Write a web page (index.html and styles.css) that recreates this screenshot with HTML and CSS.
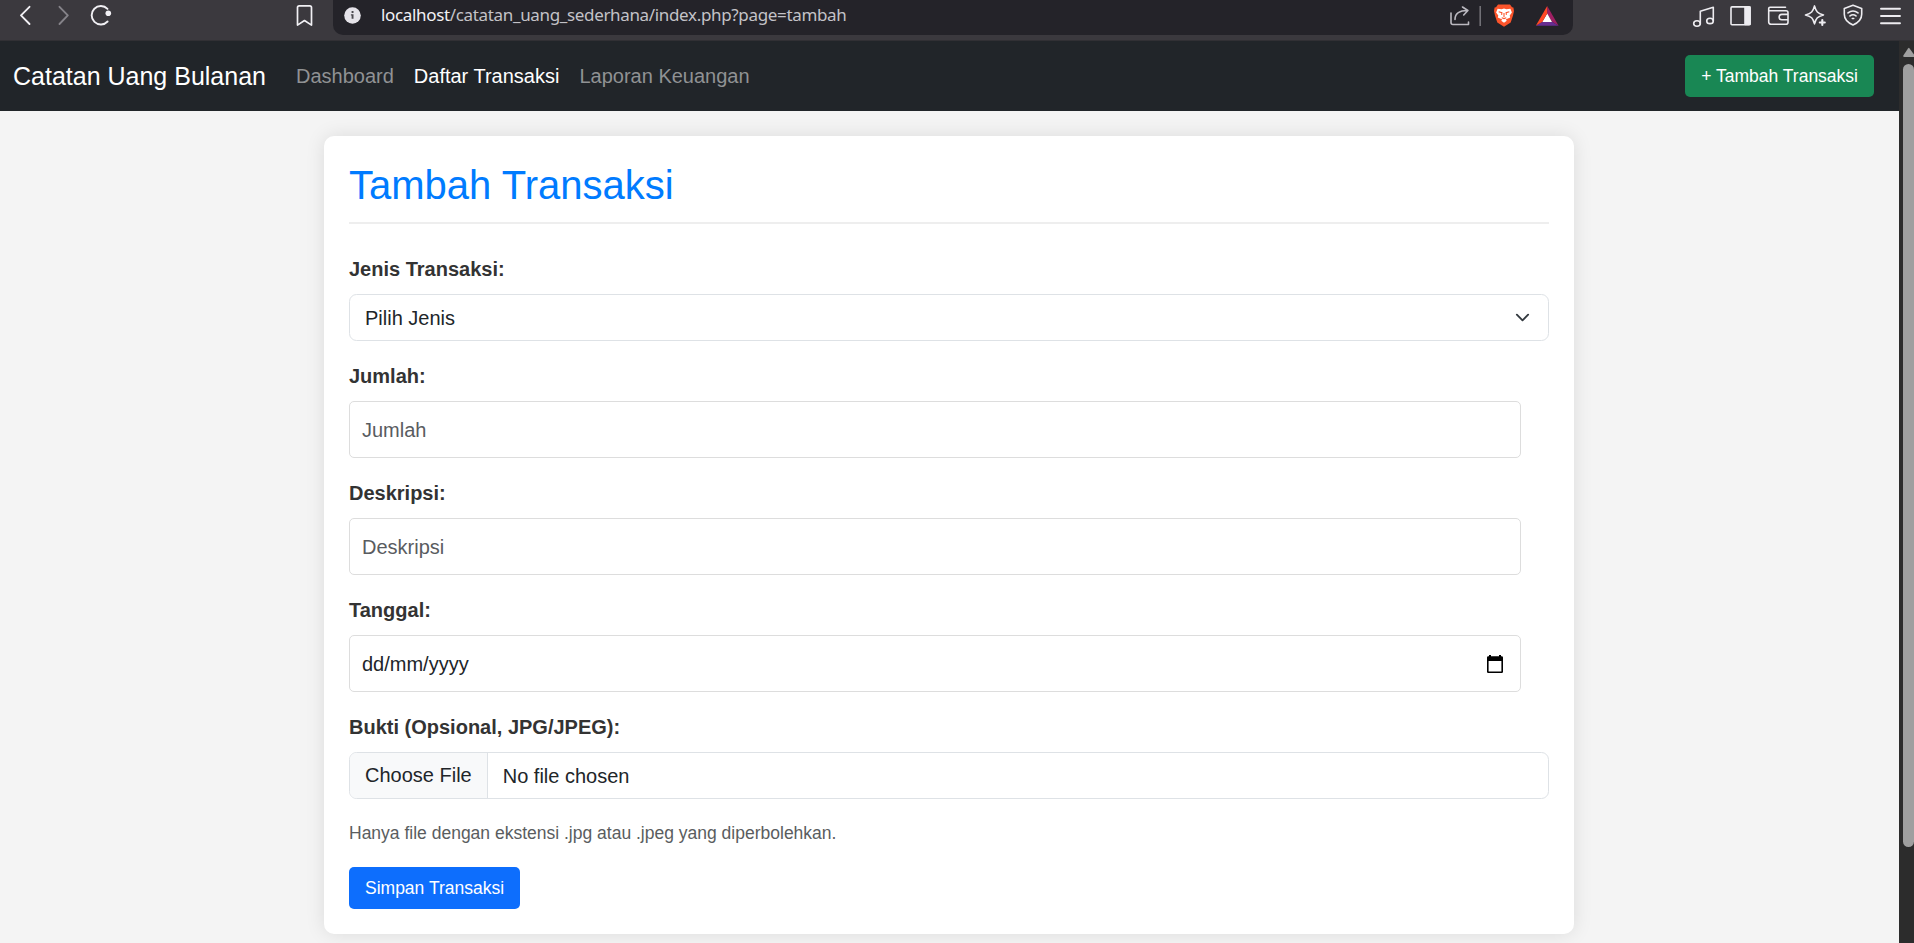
FILE: index.html
```html
<!DOCTYPE html>
<html lang="id">
<head>
<meta charset="utf-8">
<title>Catatan Uang Bulanan</title>
<link rel="stylesheet" href="styles.css">
</head>
<body>
<header class="toolbar">
  <svg class="tools-left" width="333" height="40" viewBox="0 0 333 40" fill="none" stroke="#f1f0f4" stroke-width="1.9" stroke-linecap="round" stroke-linejoin="round">
    <path d="M29.5 6.8 21 15.4l8.500 8.600"/>
    <path stroke="#858389" d="m59.500 6.800 8.300 8.600-8.300 8.600"/>
    <path d="M107.500 8.900A9.200 9.200 0 1 0 107.600 21.500"/>
    <circle cx="108.300" cy="13.300" r="2.800" fill="#f1f0f4" stroke="none"/>
    <path stroke-width="1.700" d="M297.500 7.500a1.700 1.700 0 0 1 1.700-1.700h10.600a1.700 1.700 0 0 1 1.700 1.700v17.600l-7-4.600-7 4.600z"/>
  </svg>
  <div class="address">
    <svg width="17" height="17" viewBox="0 0 17 17"><circle cx="8.500" cy="8.500" r="8.300" fill="#e5e3e9"/><path d="M7.600 4h1.900v2H7.600zM6.900 7.200h2.600v4.600H7.600V8.600h-.7z" fill="#4c4a50"/></svg>
    <span class="url"><b>localhost</b>/catatan_uang_sederhana/index.php?page=tambah</span>
    <svg class="address-icons" width="124" height="30" viewBox="0 0 124 30" fill="none">
      <g stroke="#bbb9c0" stroke-width="1.600" stroke-linecap="round" stroke-linejoin="round"><path d="M2 12v9.500a2 2 0 0 0 2 2h15.500V21M6 18.500c0-6 5-9 12.500-9m-5-3.500 5.400 3.500-4.200 4.500"/></g>
      <path d="M31.200 5v20" stroke="#77757b" stroke-width="1.500"/>
      <path d="M49 3.500h12l2 2.700 1.400.4.600 3.300-1 4.500-2.300 7-6.700 4.300-6.700-4.300-2.300-7-1-4.500.6-3.300 1.400-.4z" fill="#fb542b"/>
      <path d="m48.600 7.700 4 .5 2.400-.6 2.400.6 4-.5 1.500 3.700-2.200 3.100.5 2-4.500 2 1.100 1.300-2.800 1.900-2.800-1.900 1.100-1.300-4.500-2 .5-2-2.200-3.100z" fill="#fff"/>
      <path d="m49.700 10.700 3.200.9-.3 2.300m7.700-3.200-3.200.9.300 2.300M55 12v4m-2.300.7 2.300.9 2.300-.9" stroke="#fb542b" stroke-width="1.100"/>
      <path d="M98.200 5v8l4.800 7.800 6.600 4z" fill="#9e1f63"/><path d="M86.800 24.800h22.800l-6.600-4h-9.600z" fill="#662d91"/><path d="m98.200 12.500-5 8.500H103z" fill="#fff"/><path d="M98.200 5v7.500l-4.800 8.300-6.600 4z" fill="#ff4724"/>
    </svg>
  </div>
  <svg class="tools-right" width="224" height="40" viewBox="1690 0 224 40" fill="none" stroke="#edecf0" stroke-width="1.600" stroke-linecap="round" stroke-linejoin="round">
    <path d="M1700.300 23.500V11.300l13-4v13.500"/><ellipse cx="1697" cy="23.500" rx="3.300" ry="2.700"/><ellipse cx="1710" cy="20.900" rx="3.300" ry="2.700"/>
    <rect x="1731" y="6.900" width="19" height="17.800" rx="1"/><path d="M1745 7h5v17.500h-5z" fill="#edecf0"/>
    <path d="M1785.500 7.200h-15.500a1.300 1.300 0 0 0-1.300 1.300V22a2.300 2.300 0 0 0 2.300 2.300h15a2 2 0 0 0 2-2v-9.500a2 2 0 0 0-2-2h-17M1788 14.400h-6.200a2.700 2.700 0 0 0 0 5.400h6.200"/>
    <path d="M1814.500 5.900c1.600 6 3 7.400 9 9-6 1.600-7.400 3-9 9-1.600-6-3-7.400-9-9 6-1.600 7.400-3 9-9z"/><path d="M1822.300 19v7m-3.500-3.500h7" stroke="#3b393e" stroke-width="4.500"/><path d="M1822.300 20v5m-2.500-2.500h5" stroke-width="2.100"/>
    <path d="m1853 5.200 8.700 3.200v5.800c0 5-3.600 8.500-8.700 10.800-5.100-2.300-8.700-5.800-8.700-10.800V8.400z"/><path d="M1848 12.900c3-2.300 7-2.300 10 0M1850 15.900c2-1.500 4-1.500 6 0M1852.300 18.500h1.400"/>
    <path d="M1881 8.800h19M1881 16h19M1881 23.200h19" stroke-width="1.900"/>
  </svg>
</header>
<div class="viewport">
  <div class="page">
    <nav class="navbar">
      <a class="brand">Catatan Uang Bulanan</a>
      <a class="nav-link">Dashboard</a>
      <a class="nav-link active">Daftar Transaksi</a>
      <a class="nav-link">Laporan Keuangan</a>
      <a class="btn btn-success">+ Tambah Transaksi</a>
    </nav>
    <main class="container">
      <h2>Tambah Transaksi</h2>
      <form>
        <label>Jenis Transaksi:</label>
        <div class="control select"><span>Pilih Jenis</span>
          <svg width="15" height="15" viewBox="0 0 16 16"><path fill="none" stroke="#343a40" stroke-linecap="round" stroke-linejoin="round" stroke-width="2" d="m2 5 6 6 6-6"/></svg>
        </div>
        <label>Jumlah:</label>
        <div class="control input placeholder">Jumlah</div>
        <label>Deskripsi:</label>
        <div class="control input placeholder">Deskripsi</div>
        <label>Tanggal:</label>
        <div class="control input"><span>dd/mm/yyyy</span>
          <svg width="18" height="20" viewBox="0 0 18 20"><path d="M3 1h2v1.300h8V1h2v1.300h.7A1.300 1.300 0 0 1 17 3.600v14.100a1.300 1.300 0 0 1-1.300 1.300H2.300A1.300 1.300 0 0 1 1 17.700V3.600a1.300 1.300 0 0 1 1.300-1.300H3zM2.600 7v10.400h12.800V7z" fill="#000"/></svg>
        </div>
        <label>Bukti (Opsional, JPG/JPEG):</label>
        <div class="control file"><span class="choose">Choose File</span><span class="chosen">No file chosen</span></div>
        <small>Hanya file dengan ekstensi .jpg atau .jpeg yang diperbolehkan.</small>
        <button type="button" class="btn btn-primary">Simpan Transaksi</button>
      </form>
    </main>
  </div>
  <div class="scrollbar">
    <svg width="11" height="10" viewBox="0 0 11 10"><path d="M6 0.800 11 7.500V10H1.500Q-.5 10 .5 8.300L5 1.500Q5.500.800 6 .800z" fill="#9f9f9f"/></svg>
    <div class="thumb"></div>
  </div>
</div>
</body>
</html>
```
FILE: styles.css
```css
* { box-sizing: border-box; }
body {
  margin: 0;
  height: 943px;
  overflow: hidden;
  display: flex;
  flex-direction: column;
  font: 20px/30px "Liberation Sans", Arial, sans-serif;
  color: #212529;
  background: #f4f4f4;
}
svg { display: block; flex: none; }
.toolbar {
  flex: none;
  height: 41px;
  display: flex;
  align-items: flex-start;
  background: #3b393e;
  border-bottom: 1px solid #313034;
}
.address {
  width: 1240px;
  height: 35px;
  padding: 0 0 4px 11px;
  display: flex;
  align-items: center;
  background: #242329;
  border-radius: 0 0 10px 10px;
}
.url {
  margin-left: 20px;
  padding-bottom: 2px;
  font: 17px/28px "Noto Sans", sans-serif;
  letter-spacing: -0.34px;
  white-space: nowrap;
  color: #c3c2c7;
}
.url b { font-weight: 400; color: #f2f1f5; }
.address-icons { margin-left: auto; }
.tools-right { margin-left: auto; }
.viewport { flex: 1; min-height: 0; display: flex; }
.page { flex: 1; overflow: hidden; }
.navbar {
  height: 70px;
  padding: 0 25px 0 13px;
  display: flex;
  align-items: center;
  background: #212529;
}
.brand { margin-right: 20px; padding-bottom: 1px; font-size: 25px; color: #fff; }
.nav-link { padding: 0 10px; color: #909294; }
.nav-link.active { color: #fff; }
.btn {
  height: 42px;
  padding: 0 16px;
  border: 0;
  border-radius: 5px;
  font: 17.5px/42px "Liberation Sans", Arial, sans-serif;
  color: #fff;
}
.btn-success { margin-left: auto; background: #198754; }
.btn-primary { margin-top: 20px; background: #0d6efd; }
.container {
  width: 1250px;
  height: 798px;
  margin: 25px 0 0 324px;
  padding: 25px;
  background: #fff;
  border-radius: 10px;
  box-shadow: 0 0 19px rgba(0, 0, 0, .1);
}
h2 {
  margin: 0 0 30px;
  height: 63px;
  font-size: 40px;
  line-height: 48px;
  font-weight: 400;
  color: #007bff;
  border-bottom: 2px solid #eee;
}
form { display: flex; flex-direction: column; align-items: flex-start; }
label { margin-bottom: 10px; font-weight: 700; color: #333; }
.control {
  width: 100%;
  height: 47px;
  margin-bottom: 20px;
  display: flex;
  align-items: center;
  justify-content: space-between;
  border: 1px solid #dee2e6;
  border-radius: 7.5px;
  overflow: hidden;
}
.select { padding: 0 18px 0 15px; }
.input {
  width: 1172px;
  height: 57px;
  padding: 0 16px 0 12px;
  border-color: #ddd;
  border-radius: 5px;
}
.placeholder { color: #595c5f; }
.file { justify-content: flex-start; }
.choose { height: 45px; padding: 0 15px; line-height: 45px; background: #f8f9fa; border-right: 1px solid #dee2e6; }
.chosen { padding-left: 15px; }
small { margin-top: 1px; font-size: 17.5px; line-height: 27px; color: #5a5d60; }
.scrollbar {
  width: 15px;
  padding: 6px 0 0 4px;
  background: #2c2c2c;
}
.thumb { width: 11px; height: 783px; margin-top: 7px; border-radius: 6px; background: #9f9f9f; }
```
